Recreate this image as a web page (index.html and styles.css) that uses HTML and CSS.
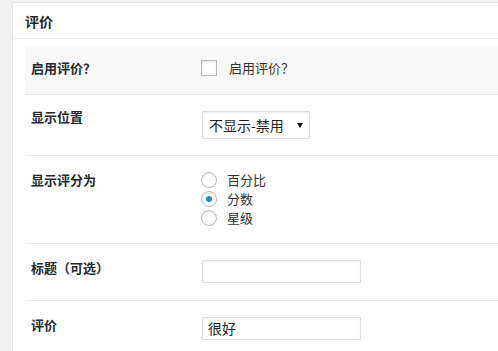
FILE: index.html
```html
<!DOCTYPE html>
<html lang="zh-CN">
<head>
    <meta charset="UTF-8">
    <meta name="viewport" content="width=device-width, initial-scale=1.0">
    <title>评价</title>
    <link rel="stylesheet" href="styles.css">
</head>
<body>
    <div class="postbox">
        <div class="postbox-header">
            <h2>评价</h2>
        </div>

        <div class="inside">
            <div class="field-row field-row-alt">
                <div class="field-label">启用评价？</div>
                <div class="field-control">
                    <label class="check-line">
                        <span class="checkbox"></span>
                        <span>启用评价？</span>
                    </label>
                </div>
            </div>

            <div class="field-row field-row-select">
                <div class="field-label label-select">显示位置</div>
                <div class="field-control">
                    <div class="select-box">
                        <span>不显示-禁用</span>
                        <span class="select-arrow"></span>
                    </div>
                </div>
            </div>

            <div class="field-row field-row-radios">
                <div class="field-label">显示评分为</div>
                <div class="field-control">
                    <ul class="radio-list">
                        <li><span class="radio"></span>百分比</li>
                        <li><span class="radio checked"></span>分数</li>
                        <li><span class="radio"></span>星级</li>
                    </ul>
                </div>
            </div>

            <div class="field-row">
                <div class="field-label">标题（可选）</div>
                <div class="field-control">
                    <div class="text-input"></div>
                </div>
            </div>

            <div class="field-row">
                <div class="field-label">评价</div>
                <div class="field-control">
                    <div class="text-input">很好</div>
                </div>
            </div>
        </div>
    </div>
</body>
</html>
```

FILE: styles.css
```css
* {
    margin: 0;
    padding: 0;
    box-sizing: border-box;
}

body {
    font-family: "Noto Sans CJK SC", "Noto Sans", sans-serif;
    background: #f1f1f1;
    padding: 2px 0 0 12px;
    overflow: hidden;
    color: #333;
}

.postbox {
    background: #fff;
    border: 1px solid #e5e5e5;
    border-right: none;
    min-height: 360px;
}

.postbox-header {
    height: 36px;
    border-bottom: 1px solid #eee;
    padding-left: 12px;
    display: flex;
    align-items: center;
}

.postbox-header h2 {
    font-size: 14px;
    font-weight: 700;
    color: #23282d;
    line-height: 1;
}

.inside {
    padding: 6px 0 0 12px;
}

.field-row {
    display: grid;
    grid-template-columns: 177px 1fr;
    padding: 16px 0 17px;
    border-bottom: 1px solid #e9e9e9;
}

.field-row-alt {
    background: #f9f9f9;
    padding: 15px 0 18px;
}

.field-row-select {
    padding: 16px 0 16px;
}

.field-row-radios {
    padding: 14px 0 16px;
}

.field-label {
    padding-left: 6px;
    font-size: 13px;
    font-weight: 700;
    line-height: 16px;
    color: #23282d;
}

.label-select {
    margin-top: -2px;
}

.field-row-radios .field-label {
    padding-top: 2px;
}

.check-line {
    display: flex;
    align-items: center;
    gap: 12px;
    font-size: 13px;
    line-height: 16px;
    margin-left: -1px;
}

.checkbox {
    width: 16px;
    height: 16px;
    border: 1px solid #b4b9be;
    background: #fff;
    box-shadow: inset 0 1px 2px rgba(0, 0, 0, 0.1);
}

.select-box {
    position: relative;
    width: 108px;
    height: 28px;
    border: 1px solid #ddd;
    background: #fff;
    box-shadow: inset 0 1px 2px rgba(0, 0, 0, 0.07);
    font-size: 14px;
    line-height: 26px;
    padding-left: 6px;
    color: #222;
}

.select-arrow {
    position: absolute;
    right: 6px;
    top: 11px;
    border-left: 3px solid transparent;
    border-right: 3px solid transparent;
    border-top: 5px solid #111;
}

.radio-list {
    list-style: none;
    margin-left: -1px;
}

.radio-list li {
    display: flex;
    align-items: center;
    gap: 10px;
    height: 19px;
    font-size: 13px;
}

.radio {
    width: 16px;
    height: 16px;
    border-radius: 50%;
    border: 1px solid #b4b9be;
    background: #fff;
    box-shadow: inset 0 1px 2px rgba(0, 0, 0, 0.1);
    display: flex;
    align-items: center;
    justify-content: center;
}

.radio.checked::before {
    content: "";
    width: 6px;
    height: 6px;
    border-radius: 50%;
    background: #1e8cbe;
}

.text-input {
    width: 159px;
    height: 23px;
    border: 1px solid #ddd;
    background: #fff;
    box-shadow: inset 0 1px 2px rgba(0, 0, 0, 0.07);
    font-size: 14px;
    line-height: 21px;
    padding-left: 5px;
    color: #222;
}
```
